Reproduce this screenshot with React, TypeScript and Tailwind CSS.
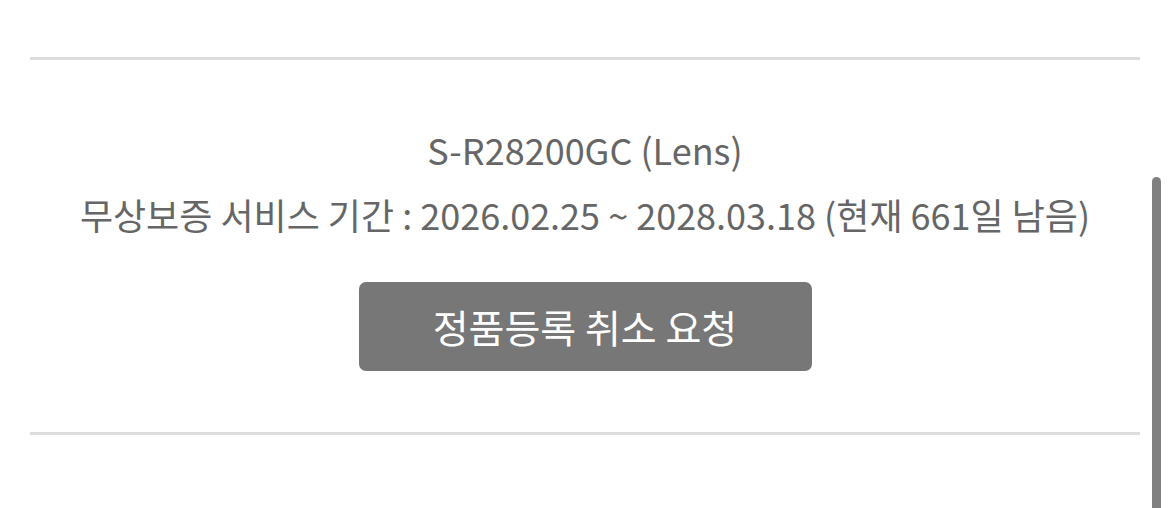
export default function App() {
  return (
    <div
      className="relative h-[508px] w-[1170px] overflow-hidden bg-white"
      style={{ fontFamily: '"Noto Sans CJK KR", "Noto Sans", sans-serif' }}
    >
      <div className="px-[30px] pt-[57px]">
        <div className="h-[3px] w-full bg-[#dddddd]" />
        <div className="flex flex-col items-center pt-[57px] pb-[61px] text-[#666666]">
          <p className="text-[36px] leading-[65px]">S-R28200GC (Lens)</p>
          <p className="text-[36px] leading-[65px]">
            무상보증 서비스 기간 : 2026.02.25 ~ 2028.03.18 (현재 661일 남음)
          </p>
          <button className="mt-[35px] flex h-[89px] w-[453px] items-center justify-center rounded-[7px] bg-[#777777] text-[39px] text-white">
            정품등록 취소 요청
          </button>
        </div>
        <div className="h-[3px] w-full bg-[#dddddd]" />
      </div>
      {/* scrollbar thumb */}
      <div className="absolute top-[177px] left-[1152px] h-[340px] w-[9px] rounded-full bg-[#808080]" />
    </div>
  );
}
